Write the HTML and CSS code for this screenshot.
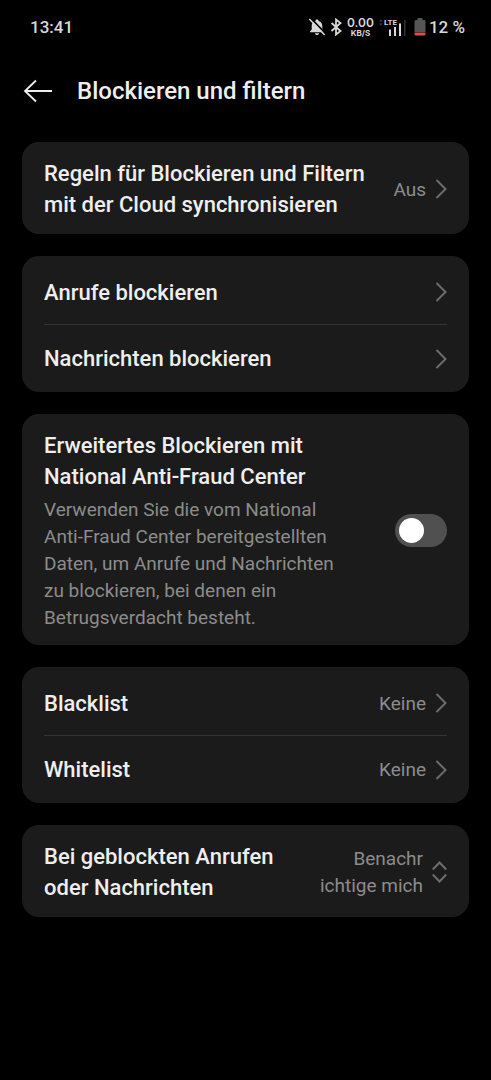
FILE: index.html
```
<!DOCTYPE html>
<html lang="de">
<head>
    <meta charset="UTF-8">
    <meta name="viewport" content="width=device-width, initial-scale=1.0">
    <title>Blockieren und filtern</title>
    <link rel="stylesheet" href="styles.css">
</head>
<body>
    <div class="statusBar">
        <span class="clock">13:41</span>
        <div class="statusIcons">
            <svg class="bell" width="18" height="18" viewBox="0 0 18 18">
                <path d="M9 1.500c1 0 1.500.5 1.500 1.400 2.500.7 3.800 2.500 3.800 4.900v3.700l1.700 1.900v.9H2v-.9l1.700-1.900V7.800c0-2.400 1.300-4.200 3.800-4.900C7.500 2 8 1.500 9 1.500z" fill="#d8d8d8"/>
                <path d="M7 15.200h4c0 1-.9 1.800-2 1.800s-2-.8-2-1.800z" fill="#d8d8d8"/>
                <path d="M2.600 0l15 15.600" stroke="#000" stroke-width="1.800"/>
                <path d="M1.300 1l15.400 16" stroke="#d8d8d8" stroke-width="1.500"/>
            </svg>
            <svg class="bluetooth" width="12" height="18" viewBox="0 0 12 18">
                <path d="M1.500 5l9 8L6 16.500v-15L10.500 5l-9 8" fill="none" stroke="#d8d8d8" stroke-width="1.800"/>
            </svg>
            <div class="netSpeed"><b>0.00</b><small>KB/S</small></div>
            <svg class="signal" width="27" height="20" viewBox="0 0 27 20">
                <path d="M0 4.500l1.800-2 1.800 2zM0 6.500h3.600l-1.800 2z" fill="#444"/>
                <text x="5" y="8" class="lte">LTE</text>
                <path d="M10 12.500h2V19h-2zM15 10h2v9h-2zM20 6.500h2V19h-2z" fill="#d8d8d8"/>
                <path d="M25 3h1.500v16H25z" fill="#333"/>
            </svg>
            <svg class="battery" width="12" height="18" viewBox="0 0 12 18">
                <path d="M3.500 0h5v2h1.500q1.500 0 1.500 1.500V14H.5V3.500Q.5 2 2 2h1.500z" fill="#555"/>
                <path d="M.5 14.500h11V16q0 1.500-1.500 1.500H2Q.5 17.500.5 16z" fill="#d9534a"/>
            </svg>
            <span class="percent">12 %</span>
        </div>
    </div>

    <header class="header">
        <button class="back" aria-label="Zurück">
            <svg width="30" height="24" viewBox="0 0 30 24"><path d="M29 12H2M13 1.500L2 12l11 10.500" fill="none" stroke="#eee" stroke-width="1.800"/></svg>
        </button>
        <h1>Blockieren und filtern</h1>
    </header>

    <main>
        <section class="card">
            <a class="row" href="#">
                <span class="title">Regeln für Blockieren und Filtern mit der Cloud synchronisieren</span>
                <span class="value">Aus</span>
                <svg class="chevron" width="12" height="20" viewBox="0 0 12 20"><path d="M1.500 1l9 9-9 9"/></svg>
            </a>
        </section>

        <section class="card">
            <a class="row" href="#">
                <span class="title">Anrufe blockieren</span>
                <svg class="chevron" width="12" height="20" viewBox="0 0 12 20"><path d="M1.500 1l9 9-9 9"/></svg>
            </a>
            <a class="row" href="#">
                <span class="title">Nachrichten blockieren</span>
                <svg class="chevron" width="12" height="20" viewBox="0 0 12 20"><path d="M1.500 1l9 9-9 9"/></svg>
            </a>
        </section>

        <section class="card">
            <div class="row">
                <label class="fraud" for="antiFraud">
                    <span class="title">Erweitertes Blockieren mit National Anti-Fraud Center</span>
                    <span class="description">Verwenden Sie die vom National Anti-Fraud Center bereitgestellten Daten, um Anrufe und Nachrichten zu blockieren, bei denen ein Betrugsverdacht besteht.</span>
                </label>
                <input class="switch" type="checkbox" role="switch" id="antiFraud">
            </div>
        </section>

        <section class="card">
            <a class="row" href="#">
                <span class="title">Blacklist</span>
                <span class="value">Keine</span>
                <svg class="chevron" width="12" height="20" viewBox="0 0 12 20"><path d="M1.500 1l9 9-9 9"/></svg>
            </a>
            <a class="row" href="#">
                <span class="title">Whitelist</span>
                <span class="value">Keine</span>
                <svg class="chevron" width="12" height="20" viewBox="0 0 12 20"><path d="M1.500 1l9 9-9 9"/></svg>
            </a>
        </section>

        <section class="card">
            <button class="row" aria-haspopup="listbox">
                <span class="title">Bei geblockten Anrufen oder Nachrichten</span>
                <span class="value">Benachr<br>ichtige mich</span>
                <svg class="chevron" width="15" height="22" viewBox="0 0 15 22"><path d="M.8 8.500l6.700-7 6.700 7M.8 13.500l6.700 7 6.700-7"/></svg>
            </button>
        </section>
    </main>
</body>
</html>
```
FILE: styles.css
```
* {
    box-sizing: border-box;
}

body {
    margin: 0;
    background-color: #000;
    color: #eee;
    font-family: Roboto, "Liberation Sans", sans-serif;
}

a, button {
    color: inherit;
    font: inherit;
    text-decoration: none;
    background: none;
    border: none;
    cursor: pointer;
}

/* status bar */
.statusBar {
    display: flex;
    justify-content: space-between;
    align-items: center;
    height: 54px;
    padding: 0 26px 0 30px;
    color: #d8d8d8;
    font-size: 17px;
    font-weight: 500;
}
.statusIcons {
    display: flex;
    align-items: center;
}
.bluetooth {
    margin: 0 5px 0 4px;
}
.netSpeed {
    display: flex;
    flex-direction: column;
    align-items: center;
    margin-right: 5px;
    font-family: Inter, sans-serif;
}
.netSpeed b {
    font-size: 12px;
    line-height: 12px;
    font-weight: 600;
}
.netSpeed small {
    font-size: 8px;
    line-height: 9px;
    font-weight: 700;
}
.lte {
    fill: #d8d8d8;
    font-size: 8px;
    font-weight: 700;
}
.battery {
    margin: 0 3px 0 8px;
}

/* header */
.header {
    display: flex;
    align-items: center;
    gap: 24px;
    height: 74px;
    padding: 0 23px;
}
.back {
    display: flex;
    padding: 0;
}
h1 {
    margin: 0;
    font-size: 24px;
    font-weight: 500;
}

/* cards */
main {
    display: flex;
    flex-direction: column;
    gap: 22px;
    padding: 14px 22px;
}
.card {
    padding: 2px 22px;
    border-radius: 17px;
    background-color: #1b1b1b;
}
.row {
    display: flex;
    align-items: center;
    width: 100%;
    min-height: 66px;
    padding: 14px 0 12px;
    text-align: left;
}
.row + .row {
    border-top: 1px solid #343434;
}
.title {
    flex: 1;
    font-size: 22px;
    line-height: 31px;
    font-weight: 500;
}
.value {
    margin-left: 20px;
    color: #8c8c8c;
    font-size: 19px;
    line-height: 27px;
    text-align: right;
}
.chevron {
    flex: none;
    margin-left: 9px;
    fill: none;
    stroke: #6c6c6c;
    stroke-width: 2;
}
.fraud {
    flex: 1;
    display: flex;
    flex-direction: column;
    gap: 4px;
}
.description {
    color: #8c8c8c;
    font-size: 19px;
    line-height: 27px;
}

/* toggle */
.switch {
    appearance: none;
    flex: none;
    display: flex;
    align-items: center;
    width: 52px;
    height: 33px;
    margin: 0 0 0 52px;
    padding: 0 4px;
    border-radius: 17px;
    background-color: #505050;
    cursor: pointer;
}
.switch::before {
    content: "";
    width: 25px;
    height: 25px;
    border-radius: 50%;
    background-color: #fff;
}
.switch:checked {
    justify-content: flex-end;
    background-color: #2f7cf6;
}
```
